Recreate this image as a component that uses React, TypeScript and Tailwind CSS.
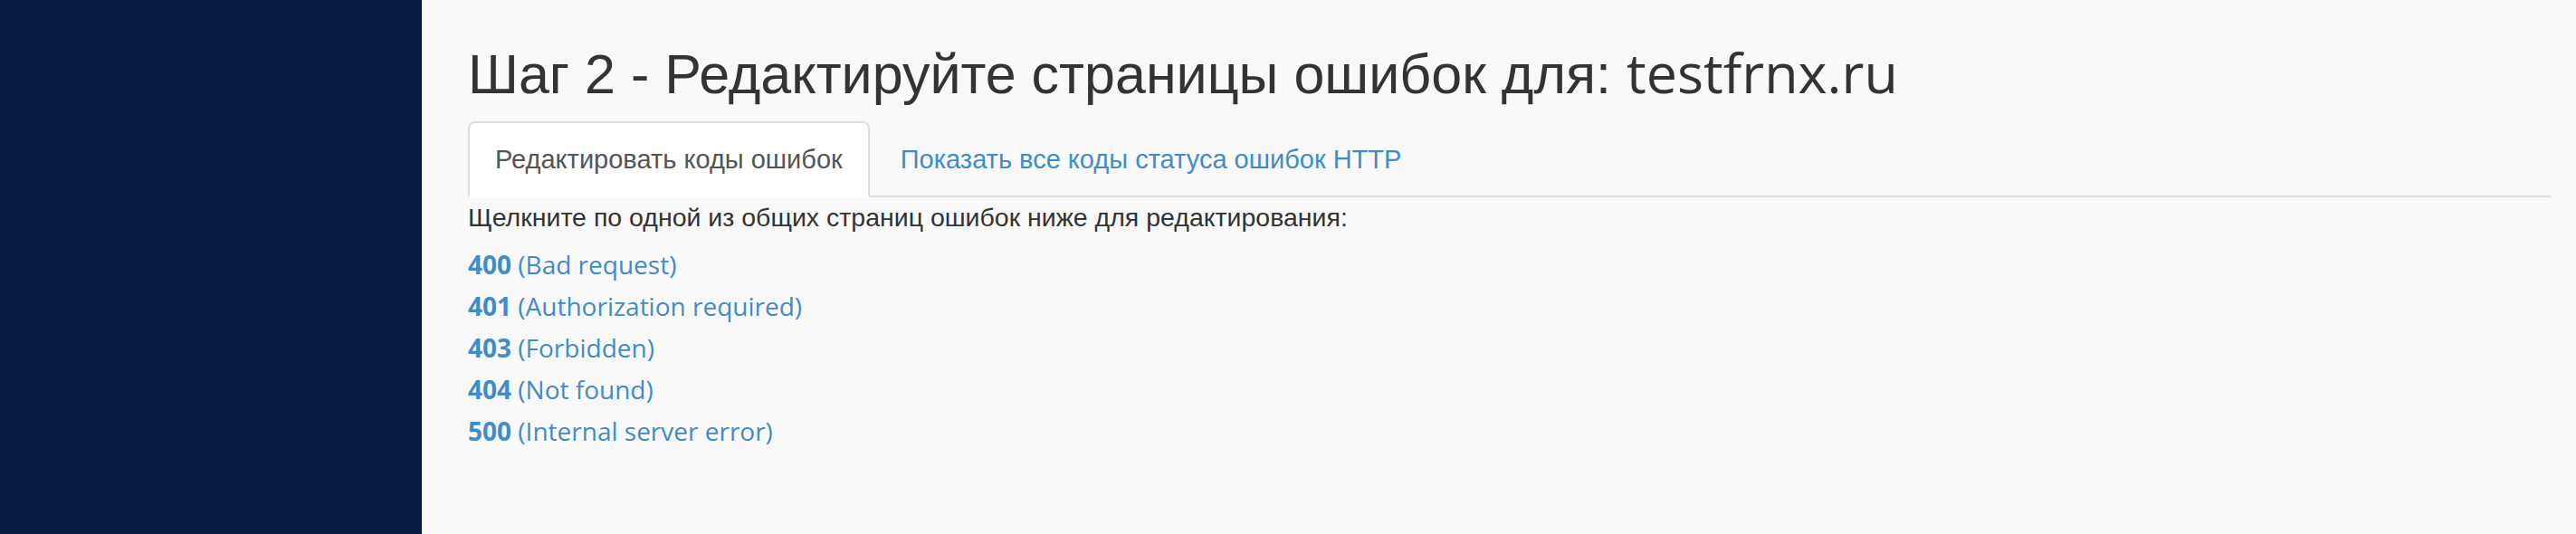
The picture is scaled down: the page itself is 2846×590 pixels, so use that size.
import React from "react";

const codes: [string, string][] = [
  ["400", "(Bad request)"],
  ["401", "(Authorization required)"],
  ["403", "(Forbidden)"],
  ["404", "(Not found)"],
  ["500", "(Internal server error)"],
];

export default function App() {
  return (
    <div className="flex h-[590px] w-full overflow-hidden">
      <div className="w-[466px] shrink-0 bg-[#061a42]" />
      <div className="flex-1 bg-[#f9f9f9] pl-[51px] pr-[28px] pt-[47px] font-['Liberation_Sans',Arial,sans-serif] text-[#333]">
        <h2 className="text-[61px] leading-[66px] font-normal">
          Шаг 2 - Редактируйте страницы ошибок для:{" "}
          <span className="font-['Open_Sans',sans-serif]">testfrnx.ru</span>
        </h2>
        <ul className="mt-[19px] flex border-b-2 border-[#dddddd] text-[29px] leading-[40px]">
          <li className="-mb-[2px] rounded-t-[8px] border-2 border-[#dddddd] border-b-transparent bg-white px-[28px] py-[20px] text-[#555]">
            Редактировать коды ошибок
          </li>
          <li className="-mb-[2px] ml-[4px] border-2 border-transparent px-[28px] py-[20px] text-[#428bca]">
            Показать все коды статуса ошибок HTTP
          </li>
        </ul>
        <p className="mt-[2px] text-[28.5px] leading-[40px]">
          Щелкните по одной из общих страниц ошибок ниже для редактирования:
        </p>
        <div className="mt-[9px] font-['Open_Sans',sans-serif] text-[28px] leading-[46px] text-[#428bca]">
          {codes.map(([c, d]) => (
            <div key={c}>
              <span className="font-bold">{c}</span> {d}
            </div>
          ))}
        </div>
      </div>
    </div>
  );
}
